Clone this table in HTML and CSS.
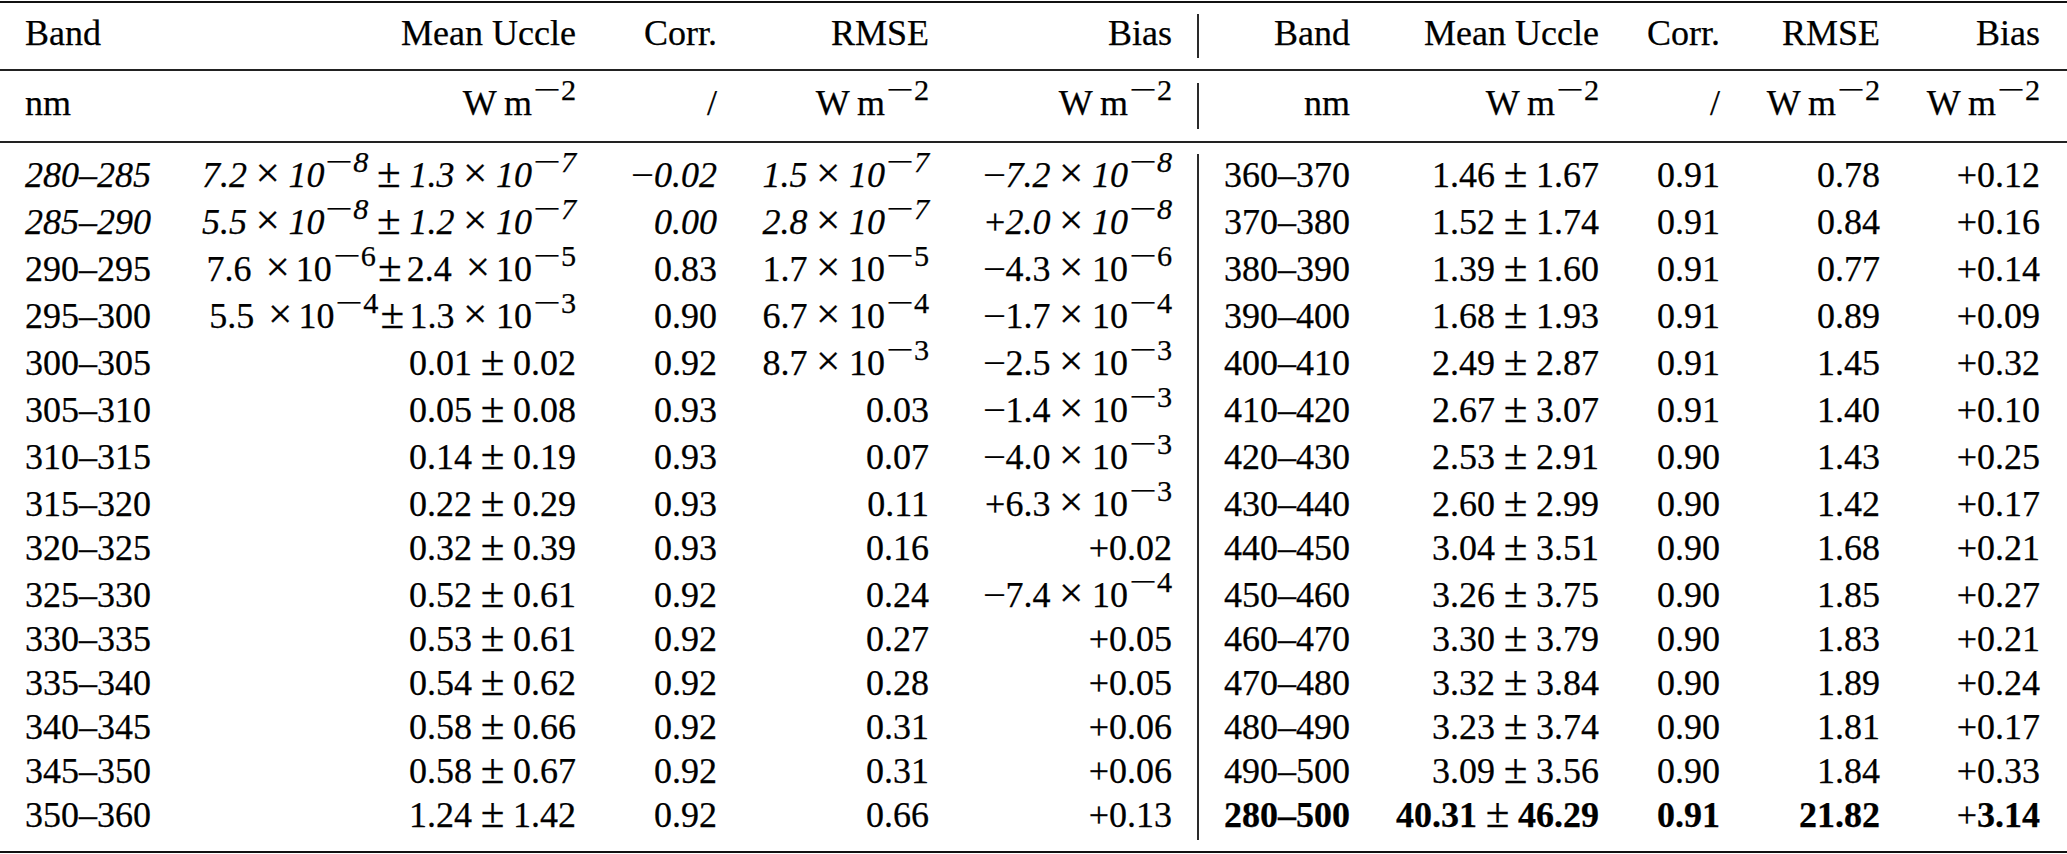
FILE: index.html
```html
<!DOCTYPE html>
<html lang="en">
<head>
<meta charset="utf-8">
<title>Band statistics</title>
<link rel="stylesheet" href="styles.css">
</head>
<body>
<div class="tbl">
  <div class="sec">
    <div class="row h1">
      <div class="c l">Band</div><div class="c">Mean Uccle</div><div class="c">Corr.</div><div class="c">RMSE</div><div class="c">Bias</div>
      <div class="c vr">Band</div><div class="c">Mean Uccle</div><div class="c">Corr.</div><div class="c">RMSE</div><div class="c">Bias</div>
    </div>
  </div>
  <div class="sec s2">
    <div class="row h2">
      <div class="c l">nm</div><div class="c">W&thinsp;m<sup><span class="mi">−</span>2</sup></div><div class="c">/</div><div class="c">W&thinsp;m<sup><span class="mi">−</span>2</sup></div><div class="c">W&thinsp;m<sup><span class="mi">−</span>2</sup></div>
      <div class="c vr">nm</div><div class="c">W&thinsp;m<sup><span class="mi">−</span>2</sup></div><div class="c">/</div><div class="c">W&thinsp;m<sup><span class="mi">−</span>2</sup></div><div class="c">W&thinsp;m<sup><span class="mi">−</span>2</sup></div>
    </div>
  </div>
  <div class="sec">
    <div class="row f">
      <div class="c l it">280–285</div>
      <div class="c it">7.2<span class="x">×</span>10<sup><span class="mi">−</span>8</sup><span class="pm">±</span>1.3<span class="x">×</span>10<sup><span class="mi">−</span>7</sup></div>
      <div class="c it"><span class="mi">−</span>0.02</div>
      <div class="c it">1.5<span class="x">×</span>10<sup><span class="mi">−</span>7</sup></div>
      <div class="c it"><span class="mi">−</span>7.2<span class="x">×</span>10<sup><span class="mi">−</span>8</sup></div>
      <div class="c vr">360–370</div><div class="c">1.46<span class="pm">±</span>1.67</div><div class="c">0.91</div><div class="c">0.78</div><div class="c"><span class="pl">+</span>0.12</div>
    </div>
    <div class="row t">
      <div class="c l it">285–290</div>
      <div class="c it">5.5<span class="x">×</span>10<sup><span class="mi">−</span>8</sup><span class="pm">±</span>1.2<span class="x">×</span>10<sup><span class="mi">−</span>7</sup></div>
      <div class="c it">0.00</div>
      <div class="c it">2.8<span class="x">×</span>10<sup><span class="mi">−</span>7</sup></div>
      <div class="c it"><span class="pl">+</span>2.0<span class="x">×</span>10<sup><span class="mi">−</span>8</sup></div>
      <div class="c vr">370–380</div><div class="c">1.52<span class="pm">±</span>1.74</div><div class="c">0.91</div><div class="c">0.84</div><div class="c"><span class="pl">+</span>0.16</div>
    </div>
    <div class="row t">
      <div class="c l">290–295</div>
      <div class="c">7.6<span class="x wide">×</span>10<sup><span class="mi">−</span>6</sup><span class="pm tight">±</span>2.4<span class="x wide">×</span>10<sup><span class="mi">−</span>5</sup></div>
      <div class="c">0.83</div>
      <div class="c">1.7<span class="x">×</span>10<sup><span class="mi">−</span>5</sup></div>
      <div class="c"><span class="mi">−</span>4.3<span class="x">×</span>10<sup><span class="mi">−</span>6</sup></div>
      <div class="c vr">380–390</div><div class="c">1.39<span class="pm">±</span>1.60</div><div class="c">0.91</div><div class="c">0.77</div><div class="c"><span class="pl">+</span>0.14</div>
    </div>
    <div class="row t">
      <div class="c l">295–300</div>
      <div class="c">5.5<span class="x wide">×</span>10<sup><span class="mi">−</span>4</sup><span class="pm tight">±</span>1.3<span class="x">×</span>10<sup><span class="mi">−</span>3</sup></div>
      <div class="c">0.90</div>
      <div class="c">6.7<span class="x">×</span>10<sup><span class="mi">−</span>4</sup></div>
      <div class="c"><span class="mi">−</span>1.7<span class="x">×</span>10<sup><span class="mi">−</span>4</sup></div>
      <div class="c vr">390–400</div><div class="c">1.68<span class="pm">±</span>1.93</div><div class="c">0.91</div><div class="c">0.89</div><div class="c"><span class="pl">+</span>0.09</div>
    </div>
    <div class="row t">
      <div class="c l">300–305</div>
      <div class="c">0.01<span class="pm">±</span>0.02</div>
      <div class="c">0.92</div>
      <div class="c">8.7<span class="x">×</span>10<sup><span class="mi">−</span>3</sup></div>
      <div class="c"><span class="mi">−</span>2.5<span class="x">×</span>10<sup><span class="mi">−</span>3</sup></div>
      <div class="c vr">400–410</div><div class="c">2.49<span class="pm">±</span>2.87</div><div class="c">0.91</div><div class="c">1.45</div><div class="c"><span class="pl">+</span>0.32</div>
    </div>
    <div class="row t">
      <div class="c l">305–310</div>
      <div class="c">0.05<span class="pm">±</span>0.08</div>
      <div class="c">0.93</div>
      <div class="c">0.03</div>
      <div class="c"><span class="mi">−</span>1.4<span class="x">×</span>10<sup><span class="mi">−</span>3</sup></div>
      <div class="c vr">410–420</div><div class="c">2.67<span class="pm">±</span>3.07</div><div class="c">0.91</div><div class="c">1.40</div><div class="c"><span class="pl">+</span>0.10</div>
    </div>
    <div class="row t">
      <div class="c l">310–315</div>
      <div class="c">0.14<span class="pm">±</span>0.19</div>
      <div class="c">0.93</div>
      <div class="c">0.07</div>
      <div class="c"><span class="mi">−</span>4.0<span class="x">×</span>10<sup><span class="mi">−</span>3</sup></div>
      <div class="c vr">420–430</div><div class="c">2.53<span class="pm">±</span>2.91</div><div class="c">0.90</div><div class="c">1.43</div><div class="c"><span class="pl">+</span>0.25</div>
    </div>
    <div class="row t">
      <div class="c l">315–320</div>
      <div class="c">0.22<span class="pm">±</span>0.29</div>
      <div class="c">0.93</div>
      <div class="c">0.11</div>
      <div class="c"><span class="pl">+</span>6.3<span class="x">×</span>10<sup><span class="mi">−</span>3</sup></div>
      <div class="c vr">430–440</div><div class="c">2.60<span class="pm">±</span>2.99</div><div class="c">0.90</div><div class="c">1.42</div><div class="c"><span class="pl">+</span>0.17</div>
    </div>
    <div class="row n">
      <div class="c l">320–325</div>
      <div class="c">0.32<span class="pm">±</span>0.39</div>
      <div class="c">0.93</div>
      <div class="c">0.16</div>
      <div class="c"><span class="pl">+</span>0.02</div>
      <div class="c vr">440–450</div><div class="c">3.04<span class="pm">±</span>3.51</div><div class="c">0.90</div><div class="c">1.68</div><div class="c"><span class="pl">+</span>0.21</div>
    </div>
    <div class="row t">
      <div class="c l">325–330</div>
      <div class="c">0.52<span class="pm">±</span>0.61</div>
      <div class="c">0.92</div>
      <div class="c">0.24</div>
      <div class="c"><span class="mi">−</span>7.4<span class="x">×</span>10<sup><span class="mi">−</span>4</sup></div>
      <div class="c vr">450–460</div><div class="c">3.26<span class="pm">±</span>3.75</div><div class="c">0.90</div><div class="c">1.85</div><div class="c"><span class="pl">+</span>0.27</div>
    </div>
    <div class="row n">
      <div class="c l">330–335</div>
      <div class="c">0.53<span class="pm">±</span>0.61</div>
      <div class="c">0.92</div>
      <div class="c">0.27</div>
      <div class="c"><span class="pl">+</span>0.05</div>
      <div class="c vr">460–470</div><div class="c">3.30<span class="pm">±</span>3.79</div><div class="c">0.90</div><div class="c">1.83</div><div class="c"><span class="pl">+</span>0.21</div>
    </div>
    <div class="row n">
      <div class="c l">335–340</div>
      <div class="c">0.54<span class="pm">±</span>0.62</div>
      <div class="c">0.92</div>
      <div class="c">0.28</div>
      <div class="c"><span class="pl">+</span>0.05</div>
      <div class="c vr">470–480</div><div class="c">3.32<span class="pm">±</span>3.84</div><div class="c">0.90</div><div class="c">1.89</div><div class="c"><span class="pl">+</span>0.24</div>
    </div>
    <div class="row n">
      <div class="c l">340–345</div>
      <div class="c">0.58<span class="pm">±</span>0.66</div>
      <div class="c">0.92</div>
      <div class="c">0.31</div>
      <div class="c"><span class="pl">+</span>0.06</div>
      <div class="c vr">480–490</div><div class="c">3.23<span class="pm">±</span>3.74</div><div class="c">0.90</div><div class="c">1.81</div><div class="c"><span class="pl">+</span>0.17</div>
    </div>
    <div class="row n">
      <div class="c l">345–350</div>
      <div class="c">0.58<span class="pm">±</span>0.67</div>
      <div class="c">0.92</div>
      <div class="c">0.31</div>
      <div class="c"><span class="pl">+</span>0.06</div>
      <div class="c vr">490–500</div><div class="c">3.09<span class="pm">±</span>3.56</div><div class="c">0.90</div><div class="c">1.84</div><div class="c"><span class="pl">+</span>0.33</div>
    </div>
    <div class="row n">
      <div class="c l">350–360</div>
      <div class="c">1.24<span class="pm">±</span>1.42</div>
      <div class="c">0.92</div>
      <div class="c">0.66</div>
      <div class="c"><span class="pl">+</span>0.13</div>
      <div class="c vr b">280–500</div><div class="c b">40.31<span class="pm">±</span>46.29</div><div class="c b">0.91</div><div class="c b">21.82</div><div class="c b"><span class="pl">+</span>3.14</div>
    </div>
  </div>
</div>
</body>
</html>
```

FILE: styles.css
```css
html, body {
  margin: 0;
  padding: 0;
  background: #ffffff;
}

body {
  font-family: "Liberation Serif", "Times New Roman", serif;
  font-size: 36px;
  color: #000000;
  -webkit-text-stroke: 0.25px #000000;
}

.tbl {
  width: 2067px;
  margin-top: 1px;
  border-top: 2px solid #111111;
  border-bottom: 2px solid #111111;
}

.sec {
  padding: 11px 0;
}

.sec + .sec {
  border-top: 2px solid #222222;
}

.sec.s2 {
  padding: 12px 0;
}

.row {
  display: grid;
  grid-template-columns: 200px 376px 141px 212px 243px 178px 249px 121px 160px 160px;
  height: 44px;
}

.c {
  text-align: right;
  white-space: nowrap;
  line-height: 38px;
}

.c.l {
  text-align: left;
  padding-left: 25px;
}

.c.vr {
  margin-left: 25px;
  border-left: 2px solid #2a2a2a;
}

.row.h1 { height: 44px; }
.row.h2 { height: 46px; }
.row.h2 .c { padding-top: 1px; }
.row.f { height: 46px; }
.row.f .c { padding-top: 2px; }
.row.t { height: 47px; }
.row.t .c { padding-top: 3px; }
.row.n { height: 44px; }

.it { font-style: italic; }
.b { font-weight: bold; }

.x, .pm, .pl, .mi {
  font-style: normal;
  font-weight: normal;
}

.x, .pm {
  font-size: 1.2em;
  line-height: 0;
}

.x { margin: 0 0.2em; }
.x.wide { margin: 0 0.14em 0 0.32em; }
.pm { margin: 0 0.2em; }
.pm.tight { margin: 0 0.12em 0 0.05em; }

.mi {
  display: inline-block;
  transform-origin: 0 50%;
  transform: scaleX(1.12);
  margin-right: 0.07em;
}

sup {
  font-size: 0.84em;
  line-height: 0;
  vertical-align: baseline;
  position: relative;
  top: -0.5em;
  margin-left: 0.03em;
}

sup .mi {
  transform: scaleX(1.6);
  margin-right: 0.36em;
}
```
